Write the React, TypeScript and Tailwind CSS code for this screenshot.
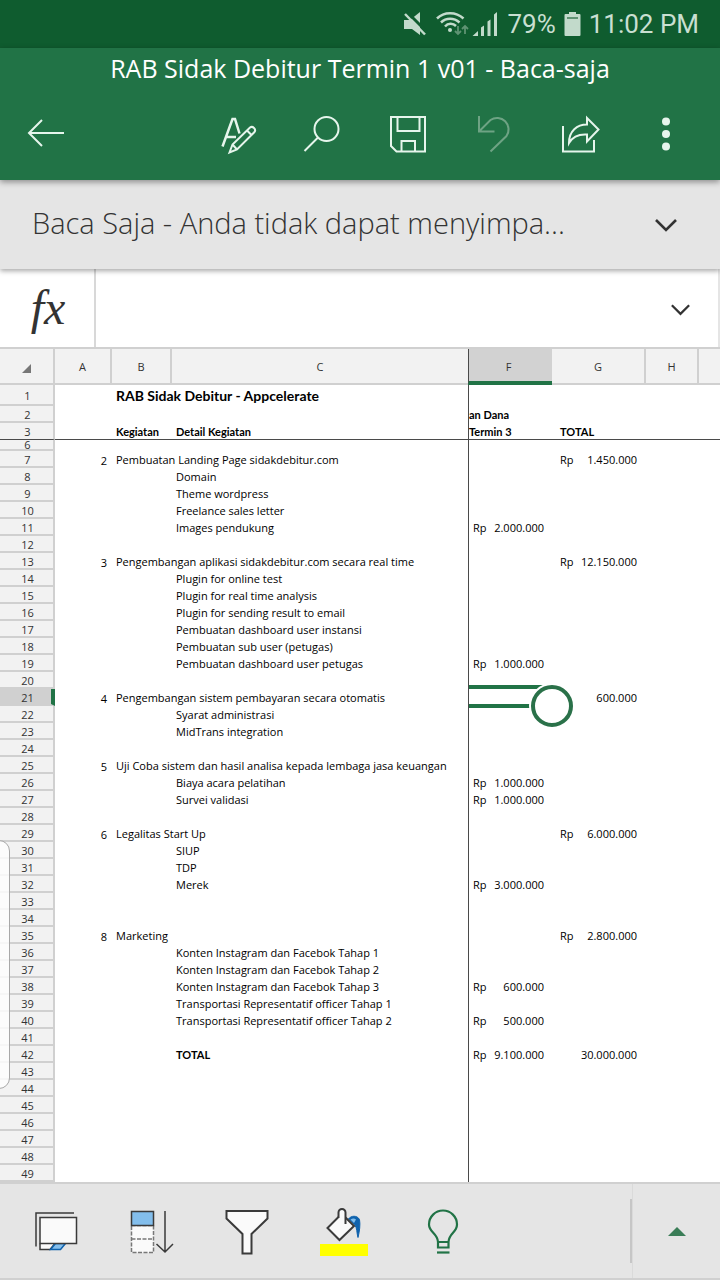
import React from "react";

type Money = { f?: string; g?: string; gRp?: boolean };
type Row = { n: number; no?: string; b?: string; c?: string } & Money;

const rows: Row[] = [
  { n: 7, no: "2", b: "Pembuatan Landing Page sidakdebitur.com", g: "1.450.000" },
  { n: 8, c: "Domain" },
  { n: 9, c: "Theme wordpress" },
  { n: 10, c: "Freelance sales letter" },
  { n: 11, c: "Images pendukung", f: "2.000.000" },
  { n: 12 },
  { n: 13, no: "3", b: "Pengembangan aplikasi sidakdebitur.com secara real time", g: "12.150.000" },
  { n: 14, c: "Plugin for online test" },
  { n: 15, c: "Plugin for real time analysis" },
  { n: 16, c: "Plugin for sending result to email" },
  { n: 17, c: "Pembuatan dashboard user instansi" },
  { n: 18, c: "Pembuatan sub user (petugas)" },
  { n: 19, c: "Pembuatan dashboard user petugas", f: "1.000.000" },
  { n: 20 },
  { n: 21, no: "4", b: "Pengembangan sistem pembayaran secara otomatis", g: "600.000", gRp: false },
  { n: 22, c: "Syarat administrasi" },
  { n: 23, c: "MidTrans integration" },
  { n: 24 },
  { n: 25, no: "5", b: "Uji Coba sistem dan hasil analisa kepada lembaga jasa keuangan" },
  { n: 26, c: "Biaya acara pelatihan", f: "1.000.000" },
  { n: 27, c: "Survei validasi", f: "1.000.000" },
  { n: 28 },
  { n: 29, no: "6", b: "Legalitas Start Up", g: "6.000.000" },
  { n: 30, c: "SIUP" },
  { n: 31, c: "TDP" },
  { n: 32, c: "Merek", f: "3.000.000" },
  { n: 33 },
  { n: 34 },
  { n: 35, no: "8", b: "Marketing", g: "2.800.000" },
  { n: 36, c: "Konten Instagram dan Facebok Tahap 1" },
  { n: 37, c: "Konten Instagram dan Facebok Tahap 2" },
  { n: 38, c: "Konten Instagram dan Facebok Tahap 3", f: "600.000" },
  { n: 39, c: "Transportasi Representatif officer Tahap 1" },
  { n: 40, c: "Transportasi Representatif officer Tahap 2", f: "500.000" },
  { n: 41 },
  { n: 42, c: "TOTAL", f: "9.100.000", g: "30.000.000", gRp: false },
  { n: 43 },
  { n: 44 },
  { n: 45 },
  { n: 46 },
  { n: 47 },
  { n: 48 },
  { n: 49 },
];

const headFont = "font-normal text-[#333]";
const rowHead = `${headFont} border-r-2 border-b-2 border-[#d0d0d0] bg-[#f2f2f2] p-0 pt-[2px] pl-[2px] text-center leading-[13px]`;
const colHead = `${headFont} border-r-2 border-b-2 border-[#d0d0d0] bg-[#f2f2f2] p-0 text-center`;
const frozen = "border-l border-[#4a4a4a]";
const boldFont = "font-['Lato',sans-serif] font-bold [font-variant-ligatures:none]";

function Amount({ value, rp = true }: { value: string; rp?: boolean }) {
  return (
    <div className="flex justify-between">
      <span>{rp ? "Rp" : ""}</span>
      <span>{value}</span>
    </div>
  );
}

function StatusBar() {
  return (
    <div className="flex h-12 items-center justify-end gap-2 bg-[#0f5c2f] pr-[21px] font-['Roboto',sans-serif] text-[26px] leading-none text-[#c9dfd1]">
      <svg width="98" height="30" viewBox="0 0 98 30" fill="none" aria-hidden="true">
        <path d="M3 11h6l10-8v23l-8-6H3z" fill="#c2dacb" />
        <path d="M5 2l21 21" stroke="#0f5c2f" strokeWidth="3" />
        <path d="M4 5l20 20.500" stroke="#c2dacb" strokeWidth="2.500" />
        <g stroke="#c2dacb" strokeWidth="2.500">
          <path d="M36 9.500C43 2.500 55 2.500 62.500 9.500" />
          <path d="M40 13.500C45 8.500 53 8.500 58.500 13.500" />
          <path d="M44 17.500C47 14 52 14 55 17" />
        </g>
        <circle cx="49" cy="21" r="2" fill="#c2dacb" />
        <path d="M57 17v8m-3-3 3 3 3-3M64 25v-8m-3 3 3-3 3 3" stroke="#5f9373" strokeWidth="1.800" />
        <path d="M71.500 27l5.500-5v5zM80 18.500l3-2V27h-3zM86.500 12.500l3-2V27h-3zM93 5.500l3-2.500v24h-3z" fill="#c2dacb" />
      </svg>
      <span>79%</span>
      <svg width="17" height="25" viewBox="0 0 17 25" aria-hidden="true">
        <path d="M5 0h7v2h3.500q1 0 1 1v20q0 1-1 1h-14q-1 0-1-1V3q0-1 1-1H5z" fill="#c2dacb" />
        <path d="M3 5h11v2H3z" fill="#5f9373" />
      </svg>
      <span>11:02 PM</span>
    </div>
  );
}

function Tool({ label, children }: { label: string; children: React.ReactNode }) {
  return (
    <button type="button" aria-label={label} className="flex h-full w-[86px] items-center justify-center">
      <svg width="40" height="40" viewBox="0 0 40 40" fill="none" stroke="#e6f5ec" strokeWidth="2" className="overflow-visible">
        {children}
      </svg>
    </button>
  );
}

function AppHeader() {
  return (
    <header className="relative z-20 bg-[#217346] shadow-[0_2px_6px_rgba(0,0,0,0.4)]">
      <h1 className="flex h-11 items-center justify-center pb-[2px] text-[25px] text-white">
        RAB Sidak Debitur Termin 1 v01 - Baca-saja
      </h1>
      <div className="flex h-[88px] items-center pr-[11px] pb-[6px] pl-[3px]">
        <Tool label="Kembali">
          <path d="M38 20H3M16 7 3 20l13 13" />
        </Tool>
        <div className="ml-auto flex h-full">
          <Tool label="Format">
            <path d="M6.500 33.500 16.500 6h2.500l4.500 14.500M10.500 24H20" strokeWidth="2.500" />
            <path d="M13.500 39.500l3-8L34 14.500q2-1.500 4 .5t.5 4L21 36.500zM16.500 31.500l4.500 5M31 17.500l4.500 4.500" />
          </Tool>
          <Tool label="Cari">
            <circle cx="24.500" cy="16" r="12" />
            <path d="M16 24.500 2.500 38" />
          </Tool>
          <Tool label="Simpan">
            <path d="M3 4h34v34.500H8.500L3 33zM9.500 4v14h22V4M13.500 38V28H27v10" />
          </Tool>
          <Tool label="Urungkan">
            <path d="M5 3v15.500h15.500M5 18.500 16.500 7A11.500 11.500 0 0 1 32.500 23L16.500 38.500" stroke="#6ea384" />
          </Tool>
          <Tool label="Bagikan">
            <path d="M3 13v25.500h31V27" />
            <path d="M27 5l11.500 11.500L27 28.500V21.500C19 21 13 23 9 30 9 18 17 11.500 27 11.500z" />
          </Tool>
          <Tool label="Opsi lainnya">
            <g fill="#e6f5ec" stroke="none">
              <circle cx="20" cy="8.500" r="4" />
              <circle cx="20" cy="21" r="4" />
              <circle cx="20" cy="33.500" r="4" />
            </g>
          </Tool>
        </div>
      </div>
    </header>
  );
}

function Chevron({ size }: { size: number }) {
  return (
    <svg width={size} height={size} viewBox="0 0 22 22" fill="none" stroke="#333" strokeWidth="2.600">
      <path d="M1 6l10 10L21 6" />
    </svg>
  );
}

function Selection() {
  return (
    <div className="absolute inset-x-0 -top-1 h-[23px] border-y-4 border-[#217346]">
      <div className="absolute -top-1 -right-[21px] h-[42px] w-[42px] rounded-full border-4 border-[#2a7149] bg-white shadow-[0_0_0_2px_#fff]" />
    </div>
  );
}

function Sheet() {
  return (
    <div className="relative overflow-hidden bg-white">
      <table className="w-full table-fixed border-separate border-spacing-0 text-[11px] leading-[15px] whitespace-nowrap text-black">
        <colgroup>
          <col className="w-[55px]" />
          <col className="w-[57px]" />
          <col className="w-[60px]" />
          <col className="w-[296px]" />
          <col className="w-[84px]" />
          <col className="w-[94px]" />
          <col className="w-[53px]" />
          <col />
        </colgroup>
        <thead>
          <tr className="h-9">
            <th className={colHead}>
              <svg width="9" height="9" viewBox="0 0 9 9" className="mx-auto mt-1" aria-label="Pilih semua">
                <path d="M9 0v9H0z" fill="#777" />
              </svg>
            </th>
            <th className={colHead}>A</th>
            <th className={colHead}>B</th>
            <th className={`${headFont} border-b-2 border-[#d0d0d0] bg-[#f2f2f2] p-0 text-center`}>C</th>
            <th className={`${headFont} border-b-4 border-l border-b-[#217346] border-l-[#4a4a4a] bg-[#d2d2d2] p-0 pt-[2px] pr-1 text-center`}>F</th>
            <th className={colHead}>G</th>
            <th className={colHead}>H</th>
            <th className="border-b-2 border-[#d0d0d0] bg-[#f2f2f2] p-0" />
          </tr>
        </thead>
        <tbody>
          <tr className="h-[21px]">
            <th className={rowHead}>1</th>
            <td className="p-0" />
            <td className={`${boldFont} p-0 pl-1 text-sm leading-[19px]`}>RAB Sidak Debitur - Appcelerate</td>
            <td className="p-0" />
            <td className={frozen} />
            <td className="p-0" />
            <td className="p-0" />
            <td className="p-0" />
          </tr>
          <tr className="h-[17px]">
            <th className={rowHead}>2</th>
            <td className="p-0" />
            <td className="p-0" />
            <td className="p-0" />
            <td className={`${frozen} ${boldFont} p-0`}>an Dana</td>
            <td className="p-0" />
            <td className="p-0" />
            <td className="p-0" />
          </tr>
          <tr className="h-[17px]">
            <th className={`${headFont} border-r-2 border-b border-r-[#d0d0d0] border-b-[#4a4a4a] bg-[#f2f2f2] p-0 pl-[2px] text-center leading-[13px]`}>3</th>
            <td className="border-b border-[#4a4a4a] p-0" />
            <td className={`${boldFont} border-b border-[#4a4a4a] p-0 pl-1`}>Kegiatan</td>
            <td className={`${boldFont} border-b border-[#4a4a4a] p-0 pl-1`}>Detail Kegiatan</td>
            <td className={`${boldFont} border-b border-l border-[#4a4a4a] p-0`}>Termin 3</td>
            <td className={`${boldFont} border-b border-[#4a4a4a] p-0 pl-2`}>TOTAL</td>
            <td className="border-b border-[#4a4a4a] p-0" />
            <td className="border-b border-[#4a4a4a] p-0" />
          </tr>
          <tr className="h-[11px]">
            <th className={`${headFont} border-r-2 border-b-2 border-[#d0d0d0] bg-[#f2f2f2] p-0 pl-[2px] text-center leading-[9px]`}>6</th>
            <td className="p-0" />
            <td className="p-0" />
            <td className="p-0" />
            <td className={`${frozen} p-0`} />
            <td className="p-0" />
            <td className="p-0" />
            <td className="p-0" />
          </tr>
          {rows.map((r) => (
            <tr key={r.n} className="h-[17px]">
              <th
                className={
                  r.n === 21
                    ? `${headFont} border-r-4 border-b-2 border-r-[#217346] border-b-[#d0d0d0] bg-[#d0d0d0] p-0 pt-[2px] pl-1 text-center leading-[13px]`
                    : rowHead
                }
              >
                {r.n}
              </th>
              <td className="p-0 pt-[2px] pr-[5px] text-right">{r.no}</td>
              <td className="p-0 pl-1">{r.b}</td>
              <td className={r.n === 42 ? `${boldFont} p-0 pl-1` : "p-0 pl-1"}>{r.c}</td>
              <td className={`${frozen} relative p-0 pr-2 pl-1`}>
                {r.f && <Amount value={r.f} />}
                {r.n === 21 && <Selection />}
              </td>
              <td className="p-0 pr-[9px] pl-2">{r.g && <Amount value={r.g} rp={r.gRp} />}</td>
              <td className="p-0" />
              <td className="p-0" />
            </tr>
          ))}
        </tbody>
      </table>
      <div className="absolute top-[491px] -left-3 h-[249px] w-[22px] rounded-xl border border-[#a8a8a8] bg-white/80" />
    </div>
  );
}

function Action({ label, children }: { label: string; children: React.ReactNode }) {
  return (
    <button type="button" aria-label={label} className="flex h-full w-24 items-center justify-center">
      <svg width="48" height="48" viewBox="0 0 48 48" fill="none" stroke="#3a3a3a" strokeWidth="1.500" className="overflow-visible">
        {children}
      </svg>
    </button>
  );
}

function BottomBar() {
  return (
    <footer className="flex h-[98px] border-y-2 border-[#d0d0d0] bg-[#e5e5e5] pl-2">
      <Action label="Lembar">
        <path d="M4 39.500V6h38" />
        <path d="M8 36.500v6h10l5-6" fill="#fafafa" />
        <path d="M23.500 36.500h10l-5 6h-10z" fill="#83beec" stroke="#0f62ad" />
        <path d="M8 10.500h36.500v26H8z" fill="#fafafa" />
      </Action>
      <Action label="Tampilan kartu">
        <path d="M3.500 18.500h22v27h-22zM3.500 32h22" fill="#fafafa" stroke="#777" strokeDasharray="4 1.500" />
        <path d="M3.500 4.500h22v14h-22z" fill="#83beec" />
        <path d="M37 4v41M28.500 37l8.500 8 8-8" />
      </Action>
      <Action label="Filter">
        <path d="M2.500 4h41v7.500L27.500 27v19.500h-9V27L2.500 11.500z" fill="#fafafa" strokeWidth="2" />
      </Action>
      <Action label="Warna isian">
        <path d="M0 37h48v12H0z" fill="#ffff00" stroke="none" />
        <path d="M28.500 12C31 8.500 37 8 39.500 12.500c1 5 0 12-1.500 18-1.500-5-.5-9-3.500-13z" fill="#0f62ad" stroke="#0f62ad" strokeWidth="1" />
        <path d="M30.500 12.500c2-1.500 4-1.500 5.500 0l-2 3.500z" fill="#83beec" stroke="none" />
        <path d="M18.500 10 7.500 21l12 12L34 19 25.500 10.500" fill="#fafafa" strokeWidth="2" />
        <path d="M18.500 11V5.500a3.500 3.500 0 0 1 7 0V17" fill="#fafafa" strokeWidth="2" />
      </Action>
      <Action label="Beri tahu saya">
        <g stroke="#217346" strokeWidth="2.200">
          <path d="M22 40.500V35C21.500 26 13 25.500 13 17.500a14 14 0 0 1 28 0C41 25.500 33 26 32.500 35v5.500zM22 35h10.500" />
          <path d="M21 45.500h12.500" />
        </g>
      </Action>
      <div className="ml-auto flex h-full w-[90px] items-center">
        <div className="h-16 w-[2px] bg-[#c6c6c6]" />
        <button type="button" aria-label="Buka pita" className="flex h-full flex-1 items-center justify-center border-l border-[#dadada]">
          <svg width="18" height="9" viewBox="0 0 18 9">
            <path d="M9 0l9 9H0z" fill="#3a7d57" />
          </svg>
        </button>
      </div>
    </footer>
  );
}

export default function App() {
  return (
    <div className="flex min-h-screen flex-col bg-white font-['Open_Sans','Noto_Sans',sans-serif]">
      <StatusBar />
      <AppHeader />
      <div className="relative z-10 flex h-[89px] items-center bg-[#e5e5e5] pr-[43px] shadow-[0_2px_5px_rgba(0,0,0,0.35)]">
        <p className="flex-1 truncate pb-1 pl-8 text-[29px] font-light text-[#333]">Baca Saja - Anda tidak dapat menyimpa...</p>
        <button type="button" aria-label="Perluas pesan">
          <Chevron size={22} />
        </button>
      </div>
      <div className="flex h-20 border-b-2 border-[#d0d0d0]">
        <label
          htmlFor="formula"
          className="flex w-24 items-center justify-center border-r-2 border-[#d8d8d8] pl-[2px] font-['Liberation_Serif',serif] text-[48px] leading-none text-[#333] italic"
        >
          fx
        </label>
        <input id="formula" type="text" className="min-w-0 flex-1 px-3 text-2xl outline-none" />
        <button type="button" aria-label="Perluas bilah rumus" className="flex w-20 items-center justify-center border-r-2 border-[#e5e5e5] pt-[2px] pl-[2px]">
          <Chevron size={19} />
        </button>
      </div>
      <Sheet />
      <BottomBar />
    </div>
  );
}
